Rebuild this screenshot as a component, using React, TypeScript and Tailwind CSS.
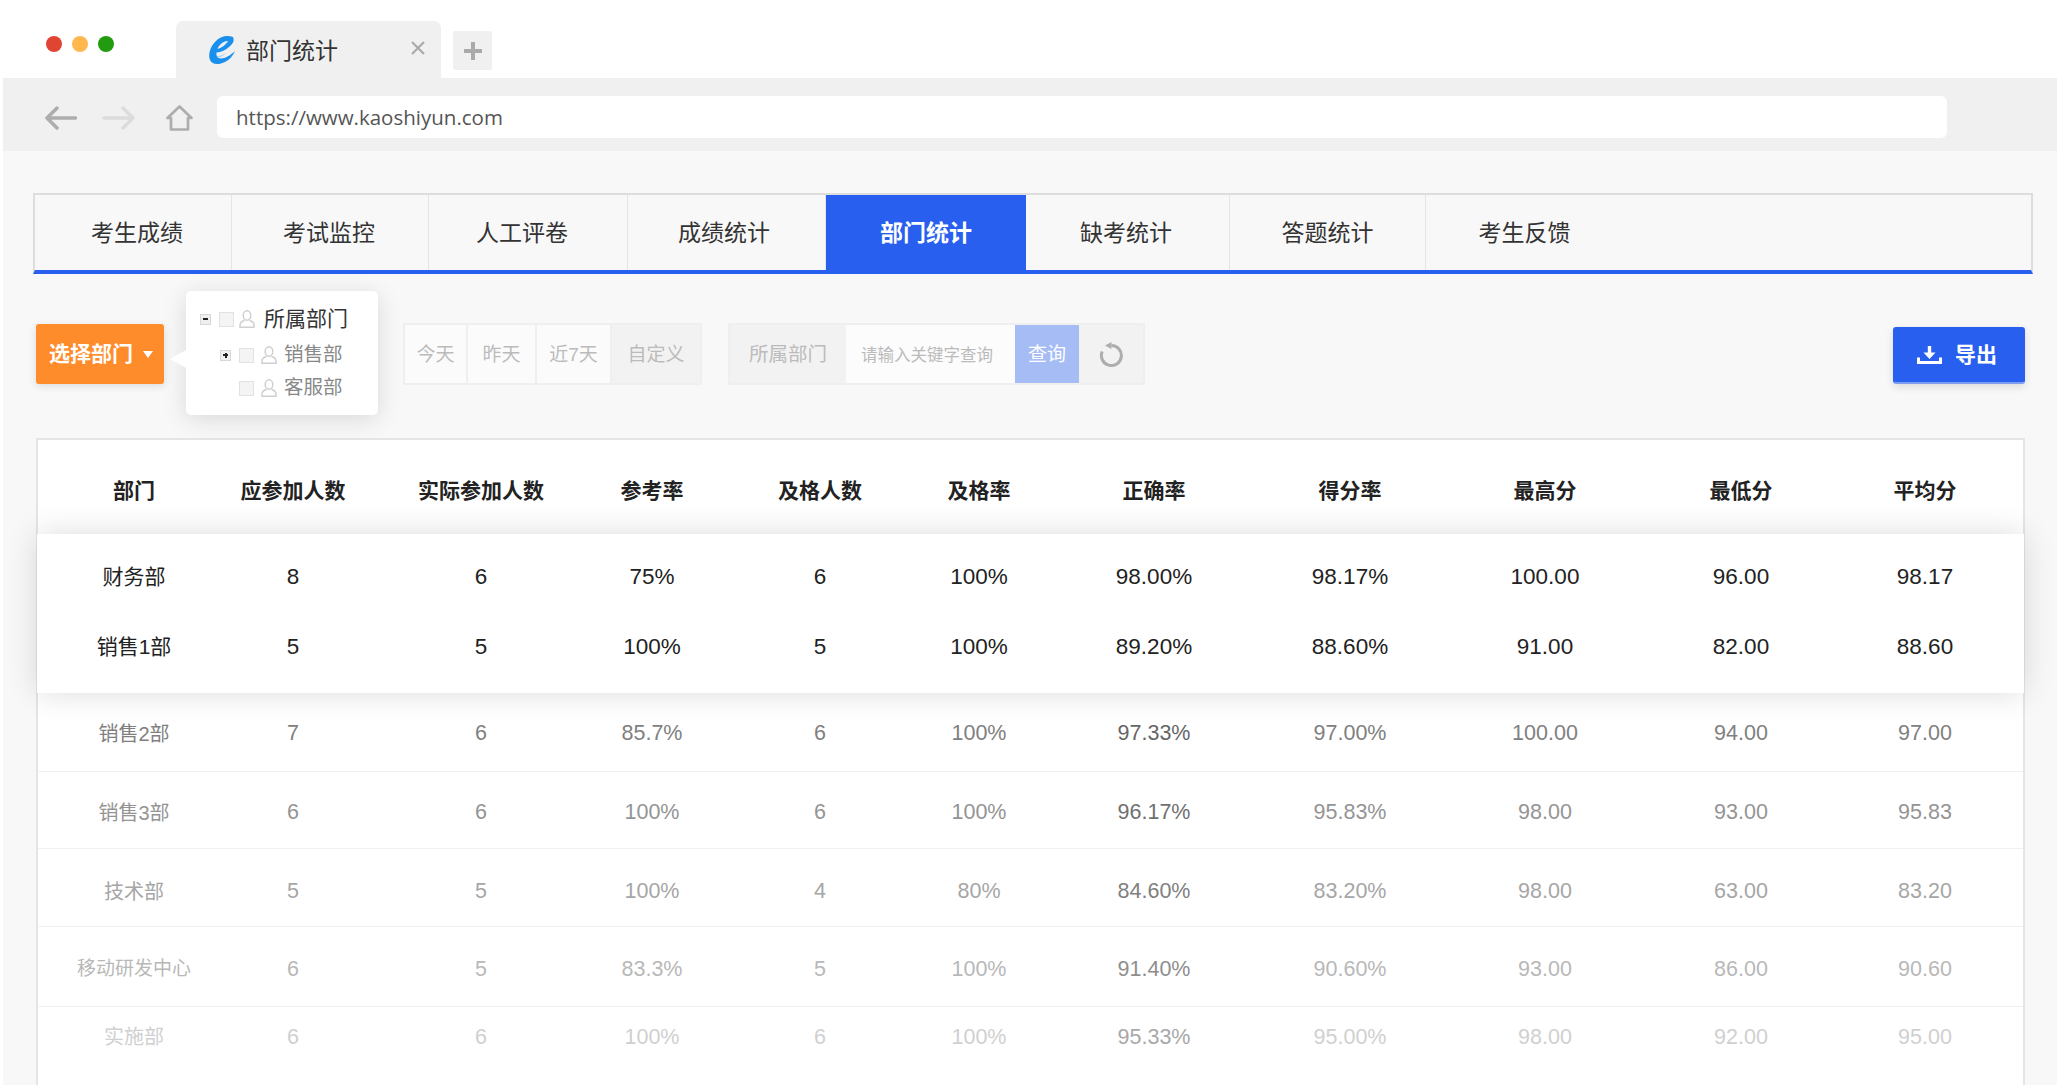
const tabs = [
  { label: "考生成绩", w: "w-[197px] pl-[8px]" },
  { label: "考试监控", w: "w-[197px] pr-[2px]" },
  { label: "人工评卷", w: "w-[199px] pr-[12px]" },
  { label: "成绩统计", w: "w-[198px] pr-[5px]" },
  { label: "部门统计", w: "w-[200px]", active: true },
  { label: "缺考统计", w: "w-[204px] pr-[3px]" },
  { label: "答题统计", w: "w-[196px]" },
  { label: "考生反馈", w: "w-[197px]" },
];

const head = ["部门", "应参加人数", "实际参加人数", "参考率", "及格人数", "及格率", "正确率", "得分率", "最高分", "最低分", "平均分"];

const topRows = [
  ["财务部", "8", "6", "75%", "6", "100%", "98.00%", "98.17%", "100.00", "96.00", "98.17"],
  ["销售1部", "5", "5", "100%", "5", "100%", "89.20%", "88.60%", "91.00", "82.00", "88.60"],
];

const fadedRows = [
  { h: "h-[79px] pt-[3px]", color: "text-[#808080]", strong: "text-[#666]", cells: ["销售2部", "7", "6", "85.7%", "6", "100%", "97.33%", "97.00%", "100.00", "94.00", "97.00"] },
  { h: "h-[77px] pt-[5px]", color: "text-[#949494]", strong: "text-[#707070]", cells: ["销售3部", "6", "6", "100%", "6", "100%", "96.17%", "95.83%", "98.00", "93.00", "95.83"] },
  { h: "h-[78px] pt-[8px]", color: "text-[#a6a6a6]", strong: "text-[#808080]", cells: ["技术部", "5", "5", "100%", "4", "80%", "84.60%", "83.20%", "98.00", "63.00", "83.20"] },
  { h: "h-[80px] pt-[6px]", color: "text-[#b8b8b8]", strong: "text-[#8e8e8e]", cells: ["移动研发中心", "6", "5", "83.3%", "5", "100%", "91.40%", "90.60%", "93.00", "86.00", "90.60"] },
  { h: "h-[78px] pb-[18px] border-b-0", color: "text-[#d0d0d0]", strong: "text-[#a8a8a8]", cells: ["实施部", "6", "6", "100%", "6", "100%", "95.33%", "95.00%", "98.00", "92.00", "95.00"] },
];

const cols = "grid grid-cols-[110px_208px_168px_174px_162px_156px_194px_198px_192px_200px_168px] items-center text-center pl-[41px] whitespace-nowrap";

const UserIcon = ({ className }: { className: string }) => (
  <svg viewBox="0 0 16 18" fill="none" stroke="#cfcfcf" strokeWidth="1.500" className={className}>
    <ellipse cx="8" cy="5.500" rx="3.800" ry="4.700" />
    <path d="M5.500 10.500C3 11.200 1 12.800 1 15v2.200h14V15c0-2.200-2-3.800-4.500-4.500" />
  </svg>
);

const CheckBox = () => <span className="block w-[15px] h-[15px] bg-[#f4f4f4] border border-[#e2e2e2] shrink-0" />;

const Toggle = ({ plus }: { plus?: boolean }) => (
  <span className="w-[11px] h-[11px] bg-[#efefef] border border-[#d8d8d8] flex items-center justify-center relative shrink-0">
    <span className="w-[5px] h-[2px] bg-[#222]" />
    {plus && <span className="absolute w-[2px] h-[5px] bg-[#222]" />}
  </span>
);

export default function App() {
  return (
    <div className="w-[2060px] h-[1085px] overflow-hidden bg-white px-[3px] font-['Liberation_Sans','Noto_Sans_CJK_SC',sans-serif]">
      {/* title bar */}
      <div className="h-[78px] flex items-end pl-[43px]">
        <div className="flex gap-[10px] mb-[26px]">
          <span className="w-4 h-4 rounded-full bg-[#e04433]" />
          <span className="w-4 h-4 rounded-full bg-[#ffb84d]" />
          <span className="w-4 h-4 rounded-full bg-[#239b0f]" />
        </div>
        <div className="ml-[62px] w-[265px] h-[57px] bg-[#f0f0f0] rounded-t-[7px] flex items-center pl-[32px]">
          <svg viewBox="0 0 28 30" className="w-[28px] h-[30px] shrink-0">
            <path
              fillRule="evenodd"
              d="M25 2C19 0 12 1 7 7C2 12 0 20 2 25C4 30 11 30 17 27C21 25 25 21 27 16C23 20 17 23.500 13 23.500C9 23.500 8 20 8.500 17.500C14 17 20 14 24 9C26 7 26 4 25 2ZM20 6C18 10 13 13 9.500 14C11 9.500 16 5.500 20 6Z"
              fill="#1a90ee"
            />
            <path d="M9 21C13 21 16 19.500 19 17.500C16 20.500 13 22.500 10 22.500Z" fill="#a9d4f7" />
          </svg>
          <span className="ml-[10px] text-[23px] leading-none text-[#333] mt-[3px]">部门统计</span>
          <svg viewBox="0 0 14 14" className="w-[14px] h-[14px] ml-auto mr-[16px] -mt-[4px]" stroke="#aaa" strokeWidth="2.200">
            <path d="M1 1l12 12M13 1L1 13" />
          </svg>
        </div>
        <div className="ml-[12px] mb-[8px] w-[39px] h-[39px] bg-[#f0f0f0] rounded-[2px] flex items-center justify-center">
          <svg viewBox="0 0 18 18" className="w-[18px] h-[18px]" stroke="#aaa" strokeWidth="4">
            <path d="M0 9h18M9 0v18" />
          </svg>
        </div>
      </div>

      {/* address bar */}
      <div className="h-[73px] bg-[#f0f0f0] flex items-start pl-[42px]">
        <svg viewBox="0 0 32 24" fill="none" stroke="#adadad" strokeWidth="3.500" strokeLinecap="round" strokeLinejoin="round" className="w-8 h-6 mt-[28px]">
          <path d="M30.500 12H2.500M12 2L2 12l10 10" />
        </svg>
        <svg viewBox="0 0 33 24" fill="none" stroke="#dcdcdc" strokeWidth="3.500" strokeLinecap="round" strokeLinejoin="round" className="w-[33px] h-6 mt-[28px] ml-[25px]">
          <path d="M2 12h28.500M21 2l10 10-10 10" />
        </svg>
        <svg viewBox="0 0 27 26" fill="none" stroke="#adadad" strokeWidth="2.700" strokeLinejoin="round" strokeLinecap="round" className="w-[27px] h-[26px] mt-[27px] ml-[31px]">
          <path d="M13.500 1.500L1.500 13H5v11.500h17V13h3.500z" />
        </svg>
        <div className="ml-[24px] mt-[18px] w-[1730px] h-[42px] bg-white rounded-[6px] flex items-center pl-[19px] text-[20.500px] text-[#555] font-['Open_Sans',sans-serif]">
          https://www.kaoshiyun.com
        </div>
      </div>

      {/* page */}
      <div className="bg-[#f8f8f8] pl-[30px] pr-[24px] pt-[42px] h-[934px]">
        <div className="flex h-[81px] border-t-2 border-x-2 border-[#ddd] border-b-[4px] border-b-[#285fee]">
          {tabs.map((t) => (
            <div
              key={t.label}
              className={
                t.active
                  ? `${t.w} flex items-center justify-center bg-[#285fee] text-white font-bold text-[23px]`
                  : `${t.w} flex items-center justify-center border-r border-[#e5e5e5] last:border-r-0 text-[23px] text-[#333]`
              }
            >
              <span className="mt-[2px]">{t.label}</span>
            </div>
          ))}
        </div>

        {/* toolbar */}
        <div className="flex items-start h-[147px] mt-[17px]">
          <div className="ml-[3px] mt-[33px] w-[128px] h-[60px] bg-[#ff8c2a] rounded-[3px] shadow-[0_2px_8px_rgba(0,0,0,0.12)] flex items-center pl-[13px] text-white font-bold text-[21px]">
            选择部门
            <span className="ml-[10px] w-0 h-0 border-x-[5px] border-x-transparent border-t-[7px] border-t-white" />
          </div>

          <div className="relative ml-[22px] w-[192px] h-[124px] bg-white rounded-[5px] shadow-[0_4px_24px_rgba(0,0,0,0.13)] pt-[18px]">
            <span className="absolute -left-[16px] top-[59px] w-0 h-0 border-y-[9px] border-y-transparent border-r-[16px] border-r-white" />
            <div className="flex items-center h-[20px] pl-[14px]">
              <Toggle />
              <span className="ml-[8px]"><CheckBox /></span>
              <UserIcon className="w-4 h-[18px] ml-[5px]" />
              <span className="ml-[9px] text-[21px] text-[#333]">所属部门</span>
            </div>
            <div className="flex items-center h-[20px] mt-[16px] pl-[34px]">
              <Toggle plus />
              <span className="ml-[8px]"><CheckBox /></span>
              <UserIcon className="w-4 h-[18px] ml-[7px]" />
              <span className="ml-[7px] text-[19.500px] text-[#888]">销售部</span>
            </div>
            <div className="flex items-center h-[20px] mt-[13px] pl-[53px]">
              <CheckBox />
              <UserIcon className="w-4 h-[18px] ml-[7px]" />
              <span className="ml-[7px] text-[19.500px] text-[#888]">客服部</span>
            </div>
          </div>

          <div className="ml-[25px] mt-[32px] flex h-[62px] pt-0 border-2 border-[#efefef] bg-[#fbfbfb] text-[19px] text-[#bbb]">
            <div className="w-[63px] pt-[2px] flex items-center justify-center border-r-2 border-[#efefef]">今天</div>
            <div className="w-[69px] pt-[2px] flex items-center justify-center border-r-2 border-[#efefef]">昨天</div>
            <div className="w-[75px] pt-[2px] flex items-center justify-center border-r-2 border-[#efefef]">近7天</div>
            <div className="w-[88px] pt-[2px] flex items-center justify-center bg-[#f2f2f2]">自定义</div>
          </div>

          <div className="ml-[26px] mt-[32px] flex h-[62px] border-2 border-[#efefef] bg-[#f2f2f2] text-[19.500px]">
            <div className="w-[116px] pt-[2px] flex items-center justify-center text-[#bbb]">所属部门</div>
            <div className="w-[169px] pt-[2px] flex items-center pl-[15px] bg-[#fcfcfc] text-[16.500px] text-[#bbb]">请输入关键字查询</div>
            <div className="w-[64px] pt-[2px] flex items-center justify-center bg-[#a6bcf5] text-white text-[19px]">查询</div>
            <div className="w-[64px] flex items-center justify-center">
              <svg viewBox="0 0 24 26" fill="none" stroke="#adadad" strokeWidth="3" className="w-6 h-[26px]">
                <path d="M12.500 4.500A10 10 0 1 1 3.200 10.500" />
                <path d="M6 4.500L12.500 1v7z" fill="#adadad" stroke="none" />
              </svg>
            </div>
          </div>

          <div className="ml-auto mr-[8px] mt-[36px] w-[132px] h-[57px] bg-[#285fee] rounded-[3px] border-b-2 border-[#7d9df2] shadow-[0_3px_8px_rgba(0,0,0,0.12)] flex items-center pl-[24px] text-white font-bold text-[21px]">
            <svg viewBox="0 0 25 18" fill="white" className="w-[25px] h-[18px]">
              <path d="M10.800 0h3.400v6.500h4.300l-6 6.500-6-6.500h4.300z" />
              <path d="M0 11.500h3v3.500h19v-3.500h3V18H0z" />
            </svg>
            <span className="ml-[13px]">导出</span>
          </div>
        </div>

        {/* table */}
        <div className="ml-[3px] mr-[8px] h-[647px] bg-white border-t-2 border-x-2 border-[#e5e5e5]">
          <div className={`${cols} h-[94px] pt-[8px] font-bold text-[21px] text-[#222]`}>
            {head.map((h) => <div key={h}>{h}</div>)}
          </div>
          <div className="relative z-10 -mx-[1px] pl-[1px] h-[159px] bg-white pt-[8px] shadow-[0_0_30px_rgba(0,0,0,0.14)] text-[22.500px] text-[#222]">
            {topRows.map((row) => (
              <div key={row[0]} className={`${cols} h-[70px]`}>
                {row.map((c, i) => <div key={i} className={i === 0 ? "text-[21px]" : ""}>{c}</div>)}
              </div>
            ))}
          </div>
          {fadedRows.map((row) => (
            <div key={row.cells[0]} className={`${cols} ${row.h} ${row.color} border-b border-[#f0f0f0] text-[21.500px]`}>
              {row.cells.map((c, i) => (
                <div
                  key={i}
                  className={i === 0 ? (c.length > 4 ? "text-[19px] justify-self-center" : "text-[20px]") : i === 6 ? row.strong : ""}
                >
                  {c}
                </div>
              ))}
            </div>
          ))}
        </div>
      </div>
    </div>
  );
}
